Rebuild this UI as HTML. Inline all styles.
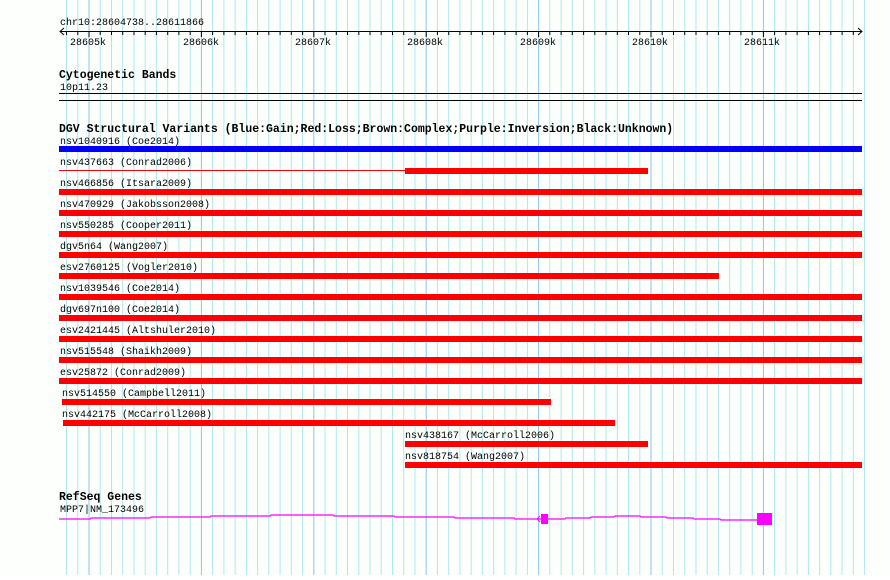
<!DOCTYPE html>
<html><head><style>
body{margin:0;background:#fff}
svg text{font-family:"Liberation Mono",monospace;font-size:10px;fill:#000}
svg text.b{font-weight:bold;font-size:11.5px}
</style></head><body>
<svg width="890" height="575" xmlns="http://www.w3.org/2000/svg">
<rect width="890" height="575" fill="#fcfffc"/>
<g id="grid"></g>
<g id="ax"></g>
<text x="60" y="25">chr10:28604738..28611866</text>
<line x1="60" y1="31.5" x2="862" y2="31.5" stroke="#000"/>
<path d="M64 28 L60 31.5 L64 35 M858 28 L862 31.5 L858 35" stroke="#000" fill="none"/>
<text x="70" y="45">28605k</text><text x="183" y="45">28606k</text><text x="295" y="45">28607k</text><text x="407" y="45">28608k</text><text x="520" y="45">28609k</text><text x="632" y="45">28610k</text><text x="744" y="45">28611k</text>
<text class="b" x="59" y="78">Cytogenetic Bands</text>
<text x="60" y="90">10p11.23</text>
<rect x="59" y="93" width="803" height="1" fill="#000"/>
<rect x="59" y="100" width="803" height="1" fill="#000"/>
<text class="b" x="59" y="132">DGV Structural Variants (Blue:Gain;Red:Loss;Brown:Complex;Purple:Inversion;Black:Unknown)</text>
<text x="60" y="144">nsv1040916 (Coe2014)</text>
<rect x="59" y="146" width="803" height="6" fill="#0000ff"/>
<text x="60" y="165">nsv437663 (Conrad2006)</text>
<rect x="59" y="170" width="346" height="1" fill="#f00"/>
<rect x="405" y="168" width="243" height="6" fill="#f00"/>
<text x="60" y="186">nsv466856 (Itsara2009)</text><rect x="59" y="189" width="803" height="6" fill="#f00"/>
<text x="60" y="207">nsv470929 (Jakobsson2008)</text><rect x="59" y="210" width="803" height="6" fill="#f00"/>
<text x="60" y="228">nsv550285 (Cooper2011)</text><rect x="59" y="231" width="803" height="6" fill="#f00"/>
<text x="60" y="249">dgv5n64 (Wang2007)</text><rect x="59" y="252" width="803" height="6" fill="#f00"/>
<text x="60" y="270">esv2760125 (Vogler2010)</text><rect x="59" y="273" width="660" height="6" fill="#f00"/>
<text x="60" y="291">nsv1039546 (Coe2014)</text><rect x="59" y="294" width="803" height="6" fill="#f00"/>
<text x="60" y="312">dgv697n100 (Coe2014)</text><rect x="59" y="315" width="803" height="6" fill="#f00"/>
<text x="60" y="333">esv2421445 (Altshuler2010)</text><rect x="59" y="336" width="803" height="6" fill="#f00"/>
<text x="60" y="354">nsv515548 (Shaikh2009)</text><rect x="59" y="357" width="803" height="6" fill="#f00"/>
<text x="60" y="375">esv25872 (Conrad2009)</text><rect x="59" y="378" width="803" height="6" fill="#f00"/>
<text x="62" y="396">nsv514550 (Campbell2011)</text><rect x="62" y="399" width="489" height="6" fill="#f00"/>
<text x="62" y="417">nsv442175 (McCarroll2008)</text><rect x="63" y="420" width="552" height="6" fill="#f00"/>
<text x="405" y="438">nsv438167 (McCarroll2006)</text><rect x="405" y="441" width="243" height="6" fill="#f00"/>
<text x="405" y="459">nsv818754 (Wang2007)</text><rect x="405" y="462" width="457" height="6" fill="#f00"/>
<text class="b" x="59" y="500">RefSeq Genes</text>
<text x="60" y="512">MPP7|NM_173496</text>
<polyline fill="none" stroke="#f0f" stroke-width="1.2" points="59,519 90,519 91,518 150,518 151,517 210,517 211,516 270,516 271,515 333,515 334,516 394,516 395,517 454,517 455,518 514,518 515,519 538,519 541,519 548,519 565,519 566,518 590,518 591,517 614,517 615,516 640,516 641,517 666,517 667,518 693,518 694,519 720,519 721,520 760,520"/>
<path d="M540 516 L537 519 L540 522" stroke="#f0f" fill="none"/>
<rect x="541" y="514" width="7" height="10" fill="#f0f"/>
<rect x="757" y="513" width="15" height="12" fill="#f0f"/>
</svg>
<script>
var g=document.getElementById('grid'),a=document.getElementById('ax'),s='',t='';
for(var k=-3;k<70;k++){var x=89+k*11.24;if(x<59||x>885)continue;var maj=(k%10==0);
s+='<rect x="'+(x-0.5).toFixed(1)+'" y="0" width="1" height="575" fill="'+(maj?'#8cc6ee':'#aee8ee')+'"/>';
if(x<=862)t+='<line x1="'+x.toFixed(1)+'" y1="31" x2="'+x.toFixed(1)+'" y2="'+(maj?37:35)+'" stroke="#000"/>';}
g.innerHTML=s;a.innerHTML=t;
</script>
</body></html>
